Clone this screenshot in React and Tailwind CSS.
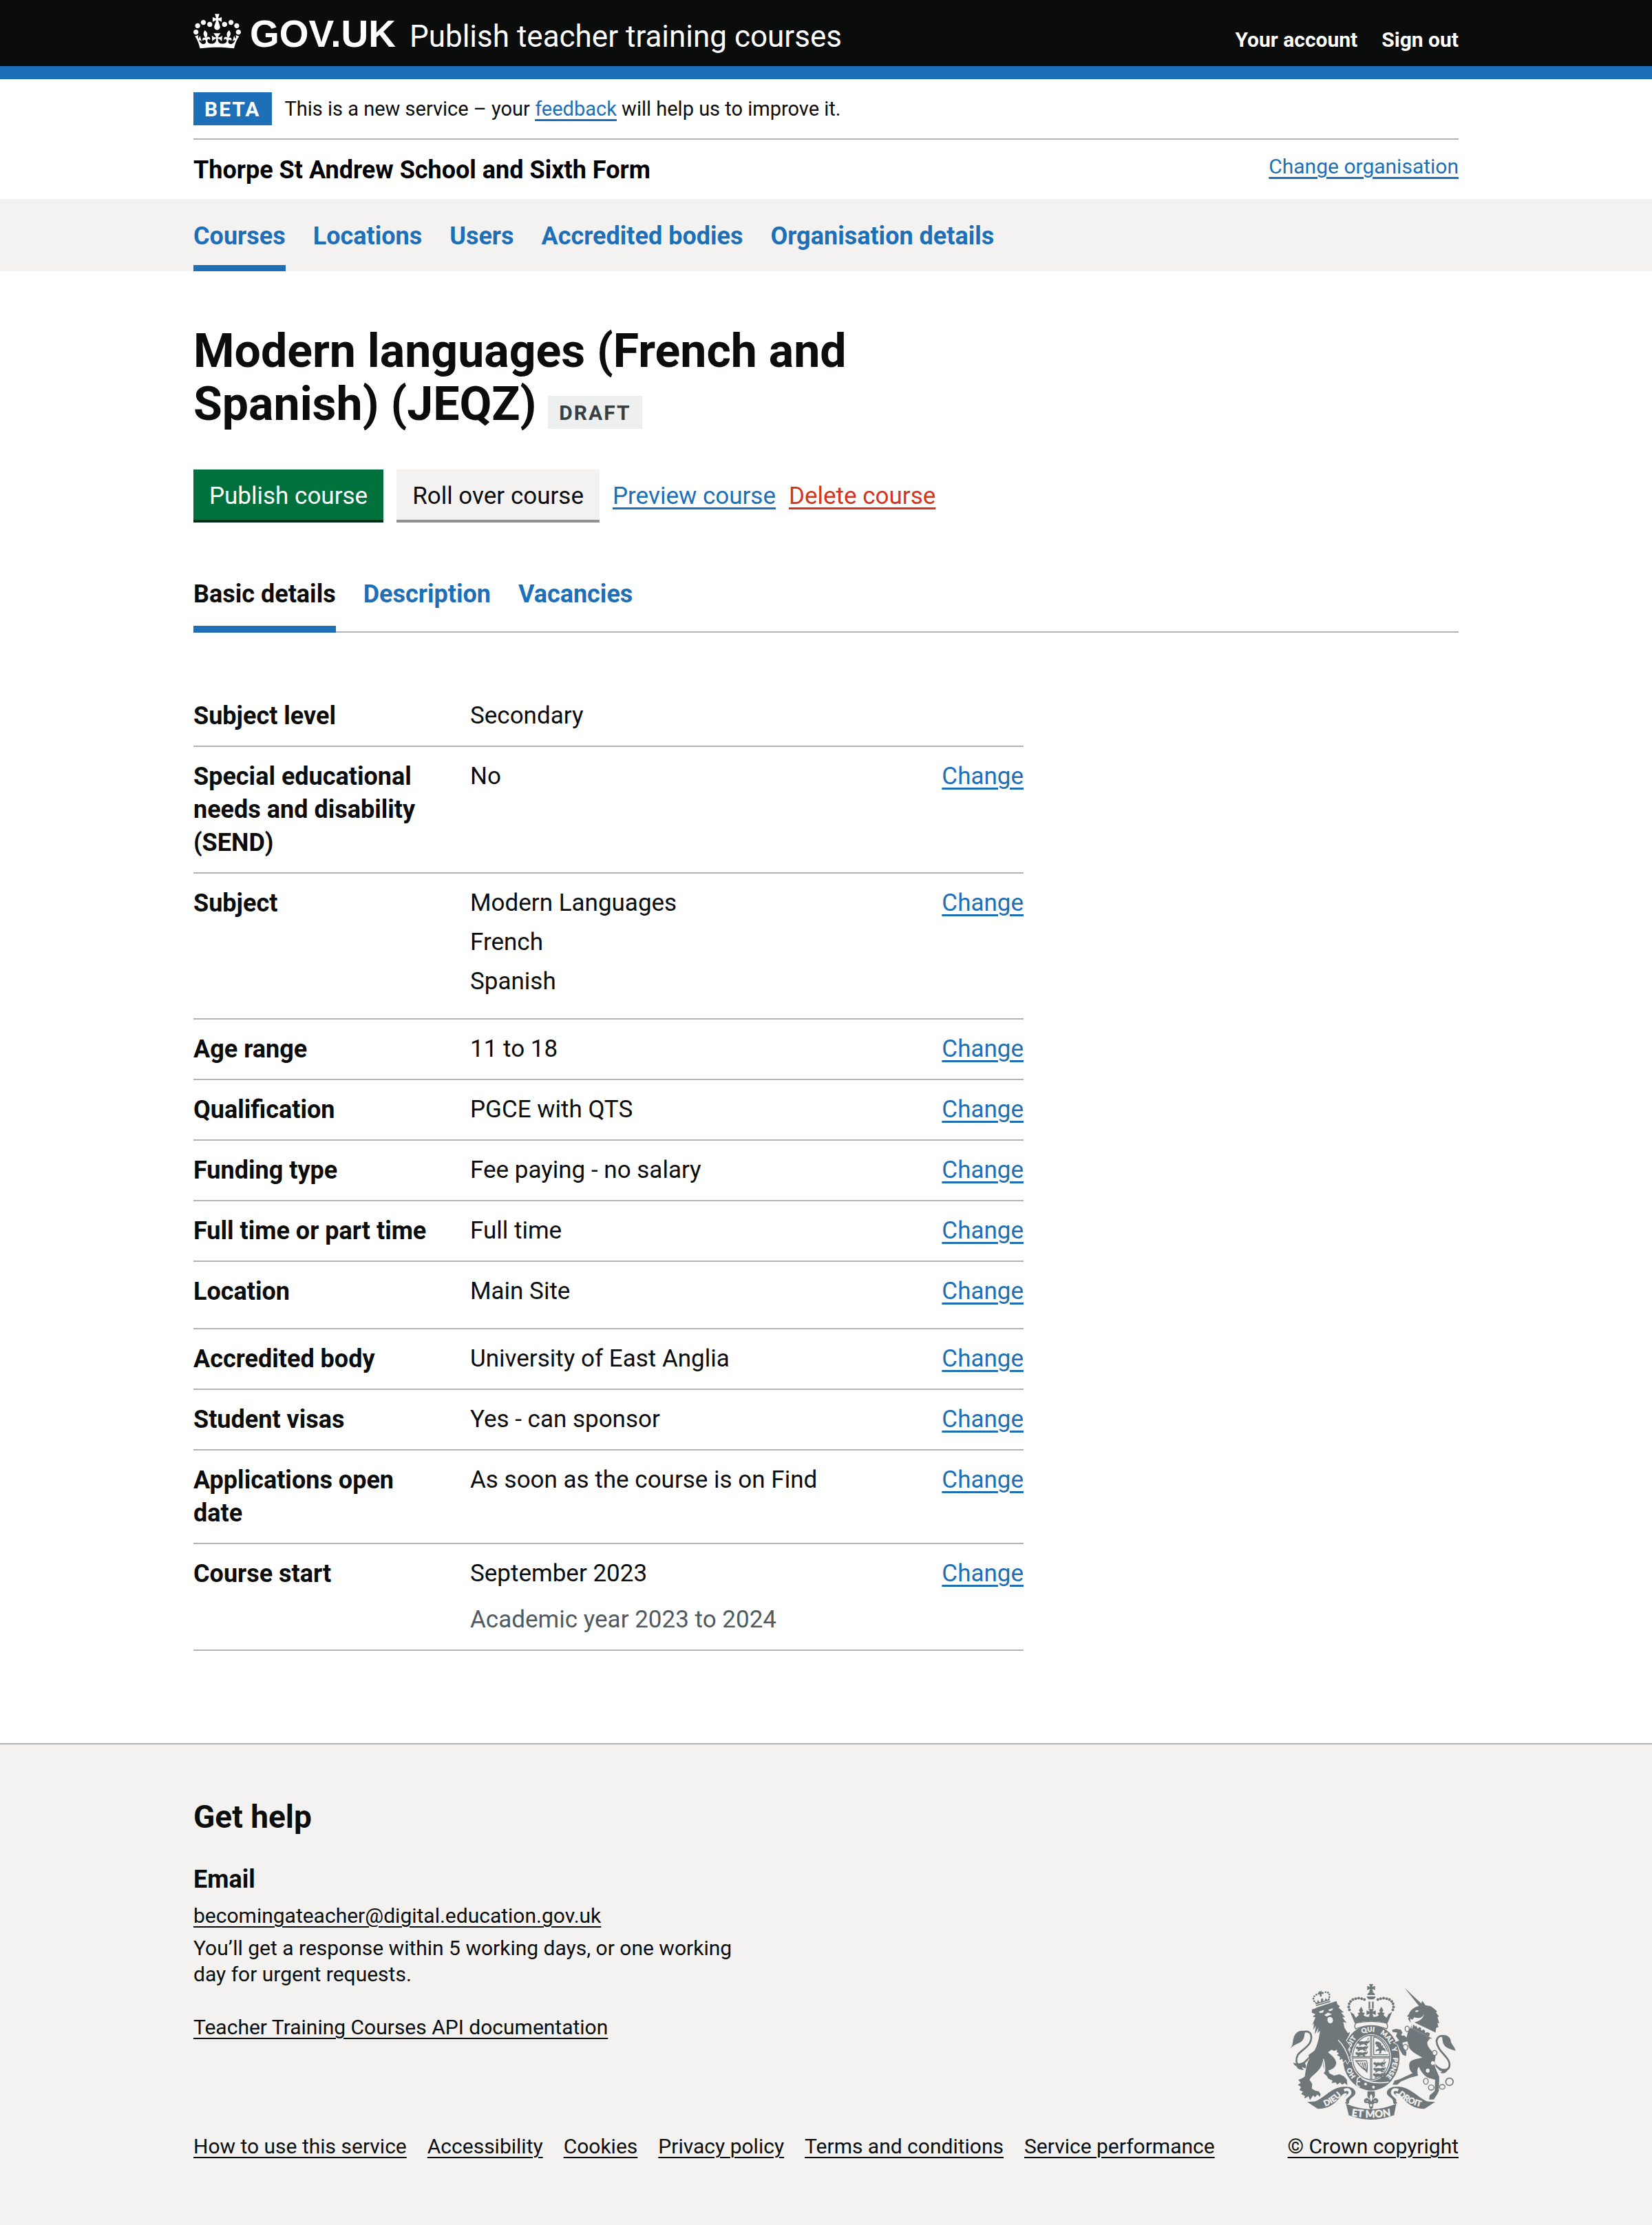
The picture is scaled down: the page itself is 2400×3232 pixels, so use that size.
import React from "react";

const primaryNav = ["Courses", "Locations", "Users", "Accredited bodies", "Organisation details"];
const tabs = ["Basic details", "Description", "Vacancies"];
const rows = [
  { key: "Subject level", value: "Secondary", fixed: true },
  { key: "Special educational needs and disability (SEND)", value: "No" },
  { key: "Subject", list: ["Modern Languages", "French", "Spanish"] },
  { key: "Age range", value: "11 to 18" },
  { key: "Qualification", value: "PGCE with QTS" },
  { key: "Funding type", value: "Fee paying - no salary" },
  { key: "Full time or part time", value: "Full time" },
  { key: "Location", list: ["Main Site"] },
  { key: "Accredited body", value: "University of East Anglia" },
  { key: "Student visas", value: "Yes - can sponsor" },
  { key: "Applications open date", value: "As soon as the course is on Find" },
  { key: "Course start", value: "September 2023", hint: "Academic year 2023 to 2024" },
];
const footerLinks = [
  "How to use this service",
  "Accessibility",
  "Cookies",
  "Privacy policy",
  "Terms and conditions",
  "Service performance",
];

const wrap = "mx-auto w-full max-w-[1838px]";
const underlined = "underline decoration-[3px] underline-offset-[5px]";
const small = "text-[30px] leading-[38px]";
const footLink = "underline decoration-2 underline-offset-[5px]";

function Crown() {
  return (
    <svg className="h-[51px] w-[69px] self-start" viewBox="0 0 132 97" fill="currentColor" aria-hidden="true">
      <path d="M25 30.2c3.5 1.5 7.7-.2 9.1-3.7 1.5-3.6-.2-7.8-3.9-9.2-3.6-1.4-7.6.3-9.1 3.9-1.4 3.5.3 7.5 3.9 9zM9 39.5c3.6 1.5 7.8-.2 9.2-3.7 1.5-3.6-.2-7.8-3.9-9.1-3.6-1.5-7.6.2-9.1 3.8-1.4 3.5.3 7.5 3.8 9zM4.4 57.2c3.5 1.5 7.7-.2 9.1-3.8 1.5-3.6-.2-7.7-3.9-9.1-3.5-1.5-7.6.3-9.1 3.8-1.4 3.5.3 7.6 3.9 9.1zm38.3-21.4c3.5 1.5 7.7-.2 9.1-3.8 1.5-3.6-.2-7.7-3.9-9.1-3.6-1.5-7.6.3-9.1 3.8-1.3 3.6.4 7.7 3.9 9.1zm64.4-5.6c-3.6 1.5-7.8-.2-9.1-3.7-1.5-3.6.2-7.8 3.8-9.2 3.6-1.4 7.7.3 9.2 3.9 1.3 3.5-.4 7.5-3.9 9zm15.9 9.3c-3.6 1.5-7.7-.2-9.1-3.7-1.5-3.6.2-7.8 3.7-9.1 3.6-1.5 7.7.2 9.2 3.8 1.5 3.5-.3 7.5-3.8 9zm4.7 17.7c-3.6 1.5-7.8-.2-9.2-3.8-1.5-3.6.2-7.7 3.9-9.1 3.6-1.5 7.7.3 9.2 3.8 1.3 3.5-.4 7.6-3.9 9.1zM89.3 35.8c-3.6 1.5-7.8-.2-9.2-3.8-1.4-3.6.2-7.7 3.9-9.1 3.6-1.5 7.7.3 9.2 3.8 1.4 3.6-.3 7.7-3.9 9.1zM69.7 17.7l8.9 4.7V9.3l-8.9 2.8c-.2-.3-.5-.6-.9-.9L72.4 0H59.6l3.5 11.2c-.3.3-.6.5-.9.9l-8.8-2.8v13.1l8.8-4.7c.3.3.6.7.9.9l-5 15.4v.1c-.2.8-.4 1.6-.4 2.4 0 4.1 3.1 7.5 7 8.1h.2c.3 0 .7.1 1 .1.4 0 .7 0 1-.1h.2c4-.6 7.1-4.1 7.1-8.1 0-.8-.1-1.7-.4-2.4V34l-5.1-15.4c.4-.2.7-.6 1-.9zM66 92.8c16.9 0 32.8 1.1 47.1 3.2 4-16.9 8.9-26.7 14-33.5l-9.6-3.4c1 4.9 1.1 7.2 0 10.2-1.5-1.4-3-4.3-4.2-8.7L108.6 76c2.8-2 5-3.2 7.5-3.3-4.4 9.4-10 11.9-13.6 11.2-4.3-.8-6.3-4.6-5.6-7.9 1-4.7 5.7-5.9 8-.5 4.3-8.7-3-11.4-7.6-8.8 7.1-7.2 7.9-13.5 2.1-21.1-8 6.1-8.1 12.3-4.5 20.8-4.7-5.4-12.1-2.5-9.5 6.2 3.4-5.2 7.9-2 7.2 3.1-.6 4.3-6.4 7.8-13.5 7.2-10.3-.9-10.9-8-11.2-13.8 2.5-.5 7.1 1.8 11 7.3L80.2 60c-4.1 4.4-8 5.3-12.3 5.4 1.4-4.4 8-11.6 8-11.6H55.5s6.4 7.2 7.9 11.6c-4.2-.1-8-1-12.3-5.4l1.4 16.4c3.9-5.5 8.5-7.7 10.9-7.3-.3 5.8-.9 12.8-11.1 13.8-7.2.6-12.9-2.9-13.5-7.2-.7-5 3.8-8.3 7.1-3.1 2.7-8.7-4.6-11.6-9.4-6.2 3.7-8.5 3.6-14.7-4.6-20.8-5.8 7.6-5 13.9 2.2 21.1-4.7-2.6-11.9.1-7.7 8.8 2.3-5.5 7.1-4.2 8.1.5.7 3.3-1.3 7.1-5.7 7.9-3.5.7-9-1.8-13.5-11.2 2.5.1 4.7 1.3 7.5 3.3l-4.7-15.4c-1.2 4.4-2.7 7.2-4.3 8.7-1.1-3-.9-5.3 0-10.2l-9.5 3.4c5 6.9 9.9 16.7 14 33.5 14.8-2.1 30.8-3.2 47.7-3.2z" />
    </svg>
  );
}

const archDots = [[299, 150], [296, 137], [298, 124], [304, 113], [314, 105], [326, 101], [339, 99], [352, 101], [364, 105]];
const lionDots = [[146, 112], [143, 101], [147, 91], [156, 84], [184, 77], [196, 73], [206, 75], [212, 83], [212, 94]];

function Beast({ x, y }) {
  return (
    <g transform={`translate(${x} ${y})`}>
      <path d="M0 9l6-6 6 4 8-2 12 2 9-4 8 3 4-6 2 6-6 8-10 2 6 5-7 3-8-6-11 2-5 5-7-1 4-6-8-3z" />
      <path d="M48 2q-4-8 3-10" fill="none" stroke="#6f777b" strokeWidth="3" />
    </g>
  );
}

function RoyalArms() {
  return (
    <svg
      className="h-[198px] w-[241px]"
      viewBox="42 38 717 590"
      fill="#6f777b"
      fontFamily="Lato, 'Liberation Sans', sans-serif"
      fontWeight="900"
      aria-hidden="true"
    >
      {/* Garter and shield */}
      <ellipse cx="393" cy="357" rx="123" ry="142" />
      <ellipse cx="393" cy="356" rx="86" ry="101" fill="#f3f2f1" />
      <ellipse cx="393" cy="356" rx="80" ry="96" fill="none" stroke="#6f777b" strokeWidth="4" />
      <path d="M393 260V450M312 355H474" stroke="#6f777b" strokeWidth="9" />
      <path d="M393 262V448M314 355H472" stroke="#f3f2f1" strokeWidth="2" />
      <Beast x={332} y={280} />
      <Beast x={326} y={304} />
      <Beast x={324} y={328} />
      <Beast x={402} y={372} />
      <Beast x={402} y={396} />
      <Beast x={400} y={420} />
      <path d="M404 266V344H466M404 266Q446 276 464 330" fill="none" stroke="#6f777b" strokeWidth="4" />
      <path d="M414 286l12 2 10 6 2 12 8-4-2 10 10 6 2 14-10-8-8 2-2 12-10 2 4-12-10-2-8 6 2-10 12-4-6-10-6 2 2-8-6-6z" />
      <path d="M322 368H374Q382 386 376 424L366 412Q350 404 322 368z" />
      <path d="M332 376Q354 376 370 374Q374 390 370 406M340 376L350 392M350 376L356 398M360 376L364 402" fill="none" stroke="#f3f2f1" strokeWidth="4" />
      <path id="arms-garter" d="M393 468A95 112 0 0 1 393 244A95 112 0 0 1 393 468" fill="none" />
      <g fill="#f3f2f1" stroke="#f3f2f1" fontSize="29" textAnchor="middle">
        <text><textPath href="#arms-garter" startOffset="15%">HO</textPath></text>
        <text><textPath href="#arms-garter" startOffset="34%">SOIT</textPath></text>
        <text><textPath href="#arms-garter" startOffset="48%">QUI</textPath></text>
        <text><textPath href="#arms-garter" startOffset="61%">MAL</textPath></text>
        <text><textPath href="#arms-garter" startOffset="70%">Y</textPath></text>
        <text><textPath href="#arms-garter" startOffset="82%">PENSE</textPath></text>
      </g>
      <circle cx="369" cy="471" r="6" fill="#f3f2f1" />
      <circle cx="403" cy="484" r="6" fill="#f3f2f1" />
      <path d="M350 440Q330 440 332 460Q326 480 344 482M332 460H346M352 446Q400 474 470 462" fill="none" stroke="#f3f2f1" strokeWidth="5" />

      {/* Lion's tail */}
      <path d="M142 345C122 352 106 384 84 390C66 386 66 362 76 344C94 320 134 306 134 268C134 248 118 238 98 246" fill="none" stroke="#6f777b" strokeWidth="8" />
      <path d="M42 318C56 304 52 288 58 270C66 244 88 236 108 242C102 262 106 272 92 286C80 296 58 300 42 318z" />
      <path d="M56 378C70 386 92 380 104 374C110 386 112 398 118 402C104 404 100 400 94 396C96 404 98 408 104 410C84 410 72 404 70 394C62 392 58 386 56 378z" />
      {/* Lion */}
      <path
        stroke="#f3f2f1"
        strokeWidth="5"
        paintOrder="stroke"
        d="M137 148L150 144L158 139L243 112L247 126L258 134L252 140L274 160L263 162L280 182L268 182L287 206L272 202L278 228L292 250L302 246L296 262L284 282L302 306L292 322L306 346L300 352L308 372L298 370L290 382L282 366L272 378L268 362L256 366L258 352L244 346L254 338L244 332L246 322L232 328L222 322L206 334C222 346 240 360 242 380C240 400 222 408 208 412L212 424L232 434L256 428L276 438L288 452L290 476L278 466L268 474L258 464L246 474L240 464L222 466L226 456L208 448L200 434L188 424L192 410L186 394L186 366L180 386C172 410 152 424 134 440L126 452L138 470L136 490L152 500L166 502L174 514L172 526L160 516L150 528L142 520L128 540L122 524L104 534L106 522L90 514L98 504L82 496L90 484L76 474L88 466L78 452L94 446L106 438C112 400 112 380 138 340C158 316 166 280 172 240L160 250L166 226L148 256L154 218L142 236L146 208L138 216L152 182L140 180L152 168L136 162z"
      />
      <path d="M122 345L150 325L150 350L128 372z" />
      <path d="M166 158l22-8-2 10-12 4zM208 150l20-8-4 10-12 4zM190 172l16-10 18 6-14 6-10 4zM204 186q10-12 22 0q6 20-10 22q-14-2-12-22zM184 362q8 30 4 60l6-6q2-30-6-54z" fill="#f3f2f1" />
      <path d="M250 280Q282 310 300 372" fill="none" stroke="#f3f2f1" strokeWidth="4" />
      {/* Lion's crown */}
      {lionDots.map(([x, y]) => (
        <circle key={`${x}-${y}`} cx={x} cy={y} r="4" />
      ))}
      <path d="M148 112L158 120L163 106L169 117L176 114L176 102L184 100L186 112L192 110L196 98L203 107L212 96L213 108L154 126z" />
      <path d="M154 131L216 113" stroke="#6f777b" strokeWidth="5" />
      <path d="M166 68l6 3 5-5 3 7 7 0-2 8-7-1 1 12-7 1-2-11-7 2-1-8 6-2z" />

      {/* Unicorn's tail */}
      <path d="M652 366C668 390 690 410 712 412C736 406 738 382 722 360C706 338 678 318 676 284C680 264 694 260 708 264" fill="none" stroke="#6f777b" strokeWidth="8" />
      <path d="M698 262C712 252 738 266 738 286C742 304 756 308 758 328C742 318 720 320 708 300C700 288 704 276 698 262z" />
      <path d="M736 396C730 408 722 406 722 414C714 426 700 426 692 422L700 416C690 414 684 408 682 402C700 406 716 408 736 396z" />
      {/* Unicorn */}
      <path d="M537 54L618 130L604 138z" />
      <path d="M584 138L608 130L614 110L628 130L652 134L670 148L678 156L674 162L686 178L680 182L688 208L680 206L684 224L674 228L672 248L580 204C606 198 620 184 622 166C616 184 600 188 580 182L572 192L562 188L564 206L552 188L558 182L548 178L556 168C560 156 570 146 584 138z" />
      <path d="M586 152l14 0-6 7-10 0z" fill="#f3f2f1" />
      <path
        stroke="#f3f2f1"
        strokeWidth="5"
        paintOrder="stroke"
        d="M572 212L656 264L636 288C634 312 654 322 672 350C670 370 664 384 672 402L688 440L686 500L680 514L664 538L644 538L646 520L660 508L668 500L670 452L640 444C620 432 608 416 600 396C592 402 592 414 596 434L560 444L522 460L506 474L486 474L494 456L516 450L572 424C556 410 554 388 562 374C574 362 596 362 614 356C590 342 564 330 556 310L550 286L528 292L532 312L546 332L544 350L530 344L516 322L508 300L492 292L514 282L500 264L506 248L486 246L484 236L502 232L522 236L532 256L546 270L552 246z"
      />
      {/* Coronet collar */}
      <path d="M574 208L660 254L654 276L566 230z" fill="#f3f2f1" />
      <path d="M568 230L654 274" stroke="#6f777b" strokeWidth="4" />
      <path d="M577 212l6 10 6-4 5 13 8-7 7 4 1 12 9-5 7 4 1 11 9-4 12 6-5 14-72-37z" />
      <g fill="none" stroke="#6f777b" strokeWidth="4">
        <ellipse cx="549" cy="232" rx="9" ry="12" />
        <ellipse cx="541" cy="312" rx="11" ry="13" />
        <ellipse cx="668" cy="336" rx="10" ry="11" fill="#f3f2f1" />
        <ellipse cx="630" cy="459" rx="10" ry="13" />
        <ellipse cx="653" cy="486" rx="12" ry="11" />
        <ellipse cx="701" cy="483" rx="12" ry="10" />
        <circle cx="732" cy="461" r="16" strokeWidth="5" />
      </g>
      <circle cx="660" cy="380" r="8" fill="#f3f2f1" />
      <ellipse cx="638" cy="413" rx="8" ry="9" fill="#f3f2f1" />
      <circle cx="530" cy="256" r="6" fill="#f3f2f1" />

      {/* Imperial crown */}
      {archDots.map(([x, y]) => (
        <g key={`${x}-${y}`}>
          <circle cx={x} cy={y} r="6" />
          <circle cx={786 - x} cy={y} r="6" />
        </g>
      ))}
      <path d="M384 38h18l-5 13 13-5v18l-13-5 5 13h-18l5-13-13 5v-18l13 5zM376 86q2-14 17-14t17 14zM374 92h38q0 8-8 12h-22q-8-4-8-12zM382 114h7v30h-7zM397 114h7v30h-7zM381 146h24l-6 12 14-6v20l-14-6 4 14h-20l4-14-14 6v-20l14 6z" />
      <path d="M302 158L318 168L326 184L340 172L334 164L346 160L340 152L350 136L358 152L354 160L366 164L360 174L376 180L393 178L410 180L426 174L420 164L432 160L428 152L437 136L446 152L440 160L452 164L446 172L460 184L468 168L484 158L464 208Q393 188 322 208z" />
      <path d="M330 206Q393 194 456 206Q470 216 460 232Q393 204 326 232Q316 216 330 206z" fill="#f3f2f1" stroke="#6f777b" strokeWidth="4" />

      {/* Fleur-de-lis */}
      <path d="M377 502H409V524Q408 532 400 534V540Q412 522 424 540Q424 558 408 552L402 560Q404 576 393 580Q382 576 384 560L378 552Q362 558 362 540Q374 522 386 540V534Q378 532 377 524z" />
      <path d="M393 514Q404 526 393 548Q382 526 393 514zM370 546q6-8 12 0zM404 546q6-8 12 0zM388 558h10v10h-10z" fill="#f3f2f1" />

      {/* Motto ribbon */}
      <path d="M116 548L150 546C196 528 220 484 278 482C318 480 332 504 322 518C314 530 298 532 298 546C298 560 290 556 284 556C268 542 274 528 286 518C292 508 276 506 264 522C240 552 214 578 162 578z" />
      <path d="M670 548L636 546C590 528 566 484 508 482C468 480 454 504 464 518C472 530 488 532 488 546C488 560 496 556 502 556C518 542 512 528 500 518C494 508 510 506 522 522C546 552 572 578 624 578z" />
      <path d="M284 556Q393 604 502 556L492 606Q393 644 296 606z" />
      <path d="M282 550C268 536 290 526 300 514C306 498 292 490 276 498" fill="none" stroke="#f3f2f1" strokeWidth="12" />
      <path d="M504 550C518 536 496 526 486 514C480 498 494 490 510 498" fill="none" stroke="#f3f2f1" strokeWidth="12" />
      <path id="arms-dieu" d="M178 572Q232 560 276 508" fill="none" />
      <path id="arms-droit" d="M498 508Q548 560 622 572" fill="none" />
      <path id="arms-mon" d="M300 608Q393 624 486 608" fill="none" />
      <g fill="#f3f2f1" stroke="#f3f2f1" textAnchor="middle">
        <text fontSize="36"><textPath href="#arms-dieu" startOffset="50%">DIEU</textPath></text>
        <text fontSize="36"><textPath href="#arms-droit" startOffset="50%">DROIT</textPath></text>
        <text fontSize="44"><textPath href="#arms-mon" startOffset="50%">ET MON</textPath></text>
      </g>
    </svg>
  );
}

function Tag({ className, children }) {
  return (
    <strong className={`inline-block px-[16px] pt-[2px] text-[30px] leading-[46px] font-bold tracking-[2px] uppercase ${className}`}>
      {children}
    </strong>
  );
}

function SummaryRow({ row }) {
  return (
    <div className="grid grid-cols-[1fr_2fr] border-b-2 border-[#b1b4b6] py-[19px]">
      <dt className="pr-[38px] text-[36px] font-bold">{row.key}</dt>
      <dd className="flex justify-between gap-[38px]">
        {row.list ? (
          <ul className="flex flex-col gap-[9px] pb-[10px]">
            {row.list.map((item) => (
              <li key={item}>{item}</li>
            ))}
          </ul>
        ) : (
          <div>
            <p>{row.value}</p>
            {row.hint && <p className="mt-[19px] text-[#505a5f]">{row.hint}</p>}
          </div>
        )}
        {!row.fixed && (
          <a href="#change" aria-label={`Change ${row.key.toLowerCase()}`} className={`self-start text-[#1d70b8] ${underlined}`}>
            Change
          </a>
        )}
      </dd>
    </div>
  );
}

export default function App() {
  return (
    <div className="bg-white font-['Roboto',sans-serif] text-[35px] leading-[48px] text-[#0b0c0c]">
      <header className="border-b-[19px] border-[#1d70b8] bg-[#0b0c0c] text-white">
        <div className={`${wrap} flex items-baseline justify-between pt-[20px] pb-[14px]`}>
          <div className="flex items-baseline">
            <a href="#govuk" className="flex items-baseline gap-[13px] font-['Liberation_Sans',sans-serif] text-[55px] leading-[58px] font-bold">
              <Crown />
              GOV.UK
            </a>
            <a href="#service" className="ml-[20px] text-[44px] leading-[58px]">
              Publish teacher training courses
            </a>
          </div>
          <nav aria-label="Account" className={`flex gap-[35px] font-bold ${small}`}>
            <a href="#account">Your account</a>
            <a href="#signout">Sign out</a>
          </nav>
        </div>
      </header>

      <div className={wrap}>
        <div className="flex items-center gap-[19px] border-b-2 border-[#b1b4b6] py-[19px]">
          <Tag className="bg-[#1d70b8] text-white">Beta</Tag>
          <p className="text-[29px] leading-[38px]">
            This is a new service – your{" "}
            <a href="#feedback" className={`text-[#1d70b8] ${underlined}`}>feedback</a> will help us to improve it.
          </p>
        </div>
        <div className="flex items-start justify-between pt-[20px] pb-[18px]">
          <p className="text-[36px] font-bold text-black">Thorpe St Andrew School and Sixth Form</p>
          <a href="#organisation" className={`text-[#1d70b8] ${small} ${underlined}`}>Change organisation</a>
        </div>
      </div>

      <nav aria-label="Organisation" className="bg-[#f3f2f1]">
        <ul className={`${wrap} flex gap-[40px] text-[36px] font-bold text-[#1d70b8]`}>
          {primaryNav.map((item, i) => (
            <li key={item}>
              <a href="#nav" className={`block border-b-[9px] pt-[30px] pb-[18px] ${i === 0 ? "border-[#1d70b8]" : "border-transparent"}`}>
                {item}
              </a>
            </li>
          ))}
        </ul>
      </nav>

      <main className={`${wrap} pt-[78px] pb-[134px]`}>
        <h1 className="max-w-[1206px] text-[68px] leading-[77px] font-bold">
          Modern languages (French and Spanish) (JEQZ) <Tag className="bg-[#eeefef] text-[#383f43]">Draft</Tag>
        </h1>

        <div className="mt-[56px] flex items-baseline gap-[19px] pb-[4px]">
          <button type="button" className="bg-[#00703c] px-[23px] pt-[20px] pb-[15px] leading-[38px] text-white shadow-[0_4px_0_#002d18]">
            Publish course
          </button>
          <button type="button" className="bg-[#f3f2f1] px-[23px] pt-[20px] pb-[15px] leading-[38px] shadow-[0_4px_0_#929191]">
            Roll over course
          </button>
          <a href="#preview" className={`text-[#1d70b8] ${underlined}`}>Preview course</a>
          <a href="#delete" className={`text-[#d4351c] ${underlined}`}>Delete course</a>
        </div>

        <nav aria-label="Course" className="mt-[80px] border-b-2 border-[#b1b4b6]">
          <ul className="-mb-[2px] flex gap-[40px] text-[36px] font-bold">
            {tabs.map((item, i) => (
              <li key={item}>
                <a
                  href="#tab"
                  className={`block border-b-[10px] pb-[22px] ${i === 0 ? "border-[#1d70b8]" : "border-transparent text-[#1d70b8]"}`}
                >
                  {item}
                </a>
              </li>
            ))}
          </ul>
        </nav>

        <dl className="mt-[78px] max-w-[1206px]">
          {rows.map((row) => (
            <SummaryRow key={row.key} row={row} />
          ))}
        </dl>
      </main>

      <footer className="border-t-2 border-[#b1b4b6] bg-[#f3f2f1] pt-[76px] pb-[95px]">
        <div className={`${wrap} flex items-end justify-between ${small}`}>
          <div>
            <h2 className="text-[46px] leading-[58px] font-bold">Get help</h2>
            <h3 className="mt-[38px] text-[36px] leading-[48px] font-bold">Email</h3>
            <a href="mailto:becomingateacher@digital.education.gov.uk" className={`mt-[10px] inline-block align-top ${footLink}`}>
              becomingateacher@digital.education.gov.uk
            </a>
            <p className="mt-[9px] max-w-[820px]">
              You’ll get a response within 5 working days, or one working day for urgent requests.
            </p>
            <a href="#api" className={`mt-[39px] inline-block align-top ${footLink}`}>
              Teacher Training Courses API documentation
            </a>
            <ul className="mt-[135px] flex gap-[30px]">
              {footerLinks.map((item) => (
                <li key={item}>
                  <a href="#footer" className={footLink}>{item}</a>
                </li>
              ))}
            </ul>
          </div>
          <a href="#copyright" className={`flex flex-col items-center gap-[19px] ${footLink}`}>
            <RoyalArms />
            © Crown copyright
          </a>
        </div>
      </footer>
    </div>
  );
}
